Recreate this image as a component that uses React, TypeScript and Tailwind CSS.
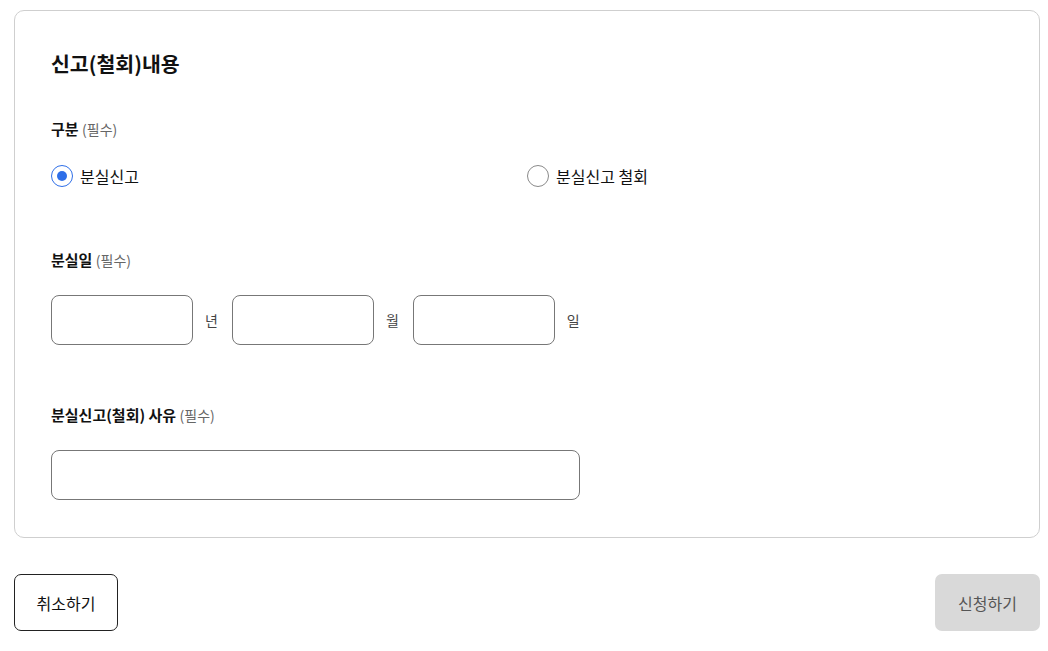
import { useState } from "react";

const font = "font-['Noto_Sans_CJK_KR','Noto_Sans',sans-serif]";

function Label({ text }: { text: string }) {
  return (
    <p className="text-[15px] leading-[20px] font-bold text-[#111]">
      {text} <span className="text-[14px] font-normal text-[#666]">(필수)</span>
    </p>
  );
}

function Radio({ checked, label, onClick }: { checked: boolean; label: string; onClick: () => void }) {
  return (
    <button type="button" onClick={onClick} className="flex items-center gap-[7px] h-[24px]">
      <span
        className={
          checked
            ? "w-[22px] h-[22px] rounded-full border-[1.5px] border-[#2f6fe8] flex items-center justify-center"
            : "w-[22px] h-[22px] rounded-full border-[1.5px] border-[#8a8a8a]"
        }
      >
        {checked && <span className="w-[10px] h-[10px] rounded-full bg-[#2f6fe8]" />}
      </span>
      <span className="text-[16px] text-[#111]">{label}</span>
    </button>
  );
}

export default function App() {
  const [kind, setKind] = useState(0);

  return (
    <div className={`${font} bg-white min-h-[651px] pl-[14px] pr-[8px] pt-[10px]`}>
      <div className="border border-[#cfcfcf] rounded-[10px] px-[36px] pt-[38px] pb-[37px]">
        <h2 className="text-[20.5px] leading-[28px] font-bold text-[#111]">신고(철회)내용</h2>

        <div className="mt-[42px]">
          <Label text="구분" />
          <div className="grid grid-cols-2 mt-[25px]">
            <Radio checked={kind === 0} label="분실신고" onClick={() => setKind(0)} />
            <Radio checked={kind === 1} label="분실신고 철회" onClick={() => setKind(1)} />
          </div>
        </div>

        <div className="mt-[62px]">
          <Label text="분실일" />
          <div className="flex items-center mt-[25px]">
            {["년", "월", "일"].map((u) => (
              <div key={u} className="flex items-center">
                <input className="w-[142px] h-[50px] rounded-[8px] border border-[#777] outline-none px-3" />
                <span className="text-[14px] text-[#444] ml-[12px] mr-[14px]">{u}</span>
              </div>
            ))}
          </div>
        </div>

        <div className="mt-[60px]">
          <Label text="분실신고(철회) 사유" />
          <input className="mt-[25px] w-[529px] h-[50px] rounded-[8px] border border-[#777] outline-none px-3" />
        </div>
      </div>

      <div className="flex justify-between mt-[36px]">
        <button className="w-[104px] h-[57px] rounded-[7px] border border-[#222] text-[16px] text-[#111]">
          취소하기
        </button>
        <button className="w-[105px] h-[57px] rounded-[7px] bg-[#d9d9d9] text-[16px] text-[#555]">
          신청하기
        </button>
      </div>
    </div>
  );
}
